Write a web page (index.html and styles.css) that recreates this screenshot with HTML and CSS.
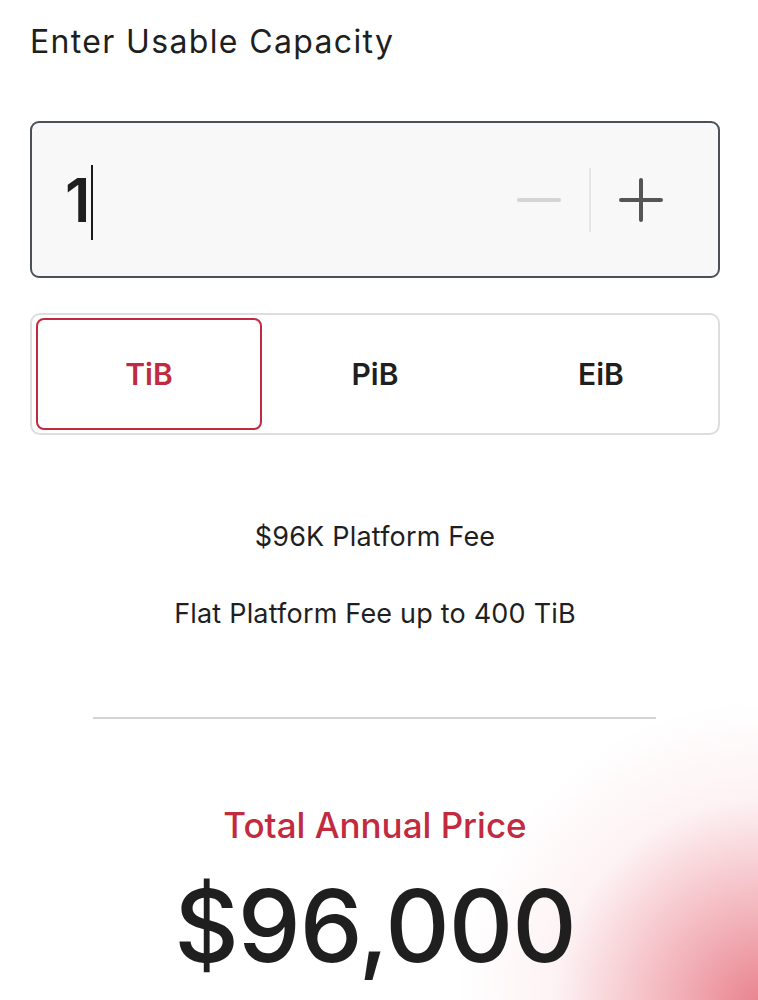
FILE: index.html
```html
<!DOCTYPE html>
<html lang="en">
<head>
	<meta charset="UTF-8">
	<meta name="viewport" content="width=device-width, initial-scale=1.0">
	<link rel="stylesheet" href="styles.css">
	<title>Pricing</title>
</head>
<body>
	<div class="calc">
		<h3 class="calc-title">Enter Usable Capacity</h3>
		<div class="amount">
			<div class="amount-value">1<span class="caret"></span></div>
			<div class="amount-controls">
				<button class="step-btn minus" disabled>
					<svg width="44" height="44" viewBox="0 0 44 44"><path d="M2 22h40" stroke="#d4d4d4" stroke-width="4" stroke-linecap="round"/></svg>
				</button>
				<span class="step-divider"></span>
				<button class="step-btn plus">
					<svg width="44" height="44" viewBox="0 0 44 44"><path d="M2 22h40M22 2v40" stroke="#555" stroke-width="4" stroke-linecap="round"/></svg>
				</button>
			</div>
		</div>
		<div class="units">
			<button class="unit active">TiB</button>
			<button class="unit">PiB</button>
			<button class="unit">EiB</button>
		</div>
		<div class="fee">
			<p>$96K Platform Fee</p>
			<p>Flat Platform Fee up to 400 TiB</p>
		</div>
		<hr class="sep">
		<div class="total">
			<h4>Total Annual Price</h4>
			<div class="total-price">$96,000</div>
		</div>
	</div>
</body>
</html>
```

FILE: styles.css
```css
html, body {
	height: 100%;
}

body {
	margin: 0;
	padding: 0;
	font-family: 'Inter', 'Liberation Sans', Arial, sans-serif;
	color: #1f1f1f;
	background: radial-gradient(circle 310px at 101% 101%, rgba(232, 126, 138, 1), rgba(238, 150, 160, .65) 35%, rgba(248, 208, 214, .28) 68%, rgba(255, 255, 255, 0) 100%), #fff;
	overflow: hidden;
}

h3, h4, p {
	margin: 0;
	padding: 0;
}

.calc {
	width: 690px;
	margin-left: 30px;
	padding-top: 23px;
}

.calc-title {
	font-size: 32px;
	font-weight: 400;
	line-height: 38px;
	letter-spacing: 1.35px;
}

.amount {
	margin-top: 60px;
	height: 153px;
	border: 2px solid #4b505b;
	border-radius: 9px;
	background: #f8f8f8;
	display: flex;
	align-items: center;
	justify-content: space-between;
	padding: 0 55px 0 33px;
}

.amount-value {
	font-size: 60px;
	font-weight: 600;
	display: flex;
	align-items: center;
}

.caret {
	display: inline-block;
	width: 2px;
	height: 75px;
	background: #1a1a1a;
	margin-left: 1px;
	margin-top: 6px;
}

.amount-controls {
	display: flex;
	align-items: center;
	gap: 28px;
}

.step-btn {
	border: 0;
	background: transparent;
	padding: 0;
	width: 44px;
	display: flex;
	justify-content: center;
}

.step-divider {
	width: 2px;
	height: 64px;
	background: #e5e5e5;
}

.units {
	margin-top: 35px;
	border: 2px solid #dcdde1;
	border-radius: 10px;
	padding: 3px 4px;
	display: grid;
	grid-template-columns: repeat(3, 1fr);
	height: 112px;
}

.unit {
	border: 2px solid transparent;
	border-radius: 8px;
	background: transparent;
	font-family: inherit;
	font-size: 30px;
	font-weight: 600;
	color: #1f1f1f;
}

.unit.active {
	border-color: #c22a40;
	color: #c22a40;
}

.fee {
	text-align: center;
	margin-top: 84px;
	font-size: 27px;
	line-height: 36px;
	letter-spacing: .2px;
}

.fee p + p {
	margin-top: 41px;
}

.sep {
	width: 563px;
	margin: 85px 0 0 63px;
	border: 0;
	border-top: 2px solid #d4d4d4;
}

.total {
	text-align: center;
	margin-top: 84px;
}

.total h4 {
	color: #c22a40;
	font-size: 35px;
	font-weight: 500;
	line-height: 44px;
}

.total-price {
	font-size: 100px;
	font-weight: 500;
	line-height: 110px;
	margin-top: 24px;
	letter-spacing: -1px;
}
```
